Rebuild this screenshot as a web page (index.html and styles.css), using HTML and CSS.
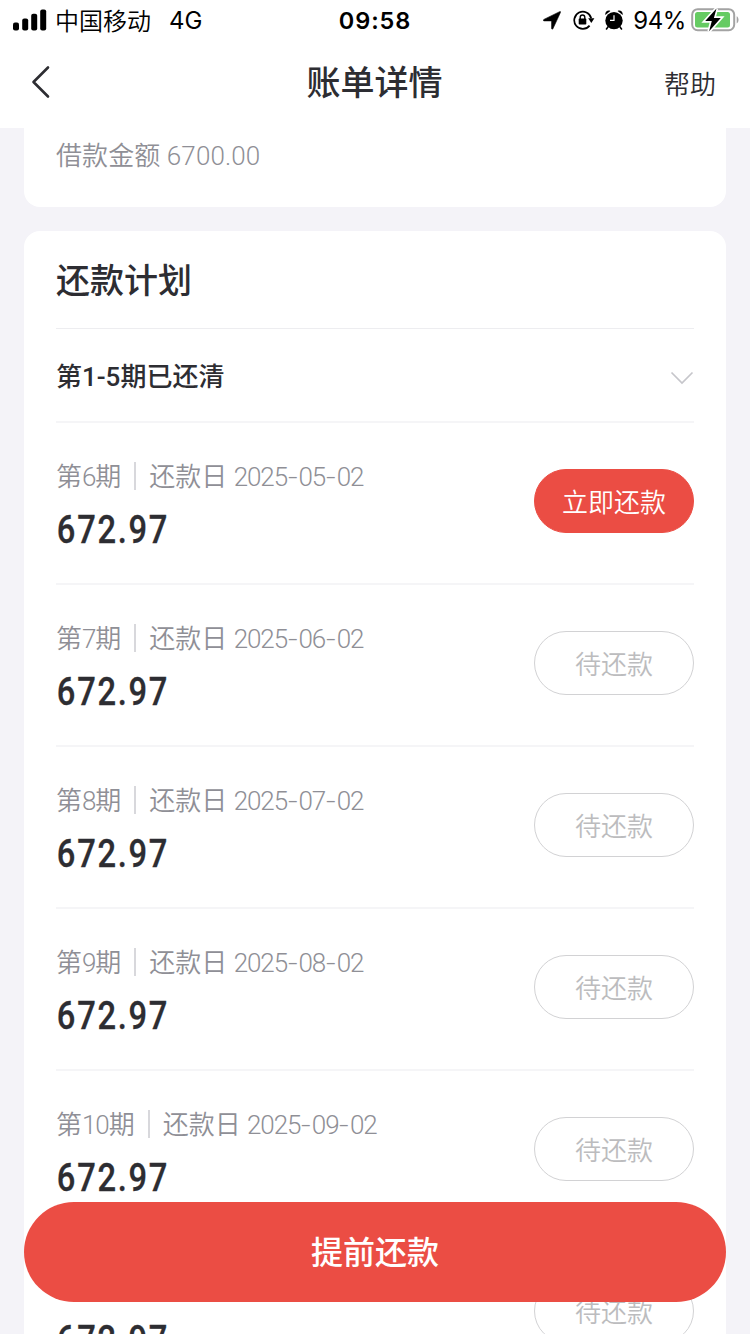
FILE: index.html
```
<!DOCTYPE html>
<html lang="zh-CN">
<head>
<meta charset="utf-8">
<title>账单详情</title>
<link rel="stylesheet" href="styles.css">
</head>
<body>
<div class="screen">
  <header class="top">
    <div class="status">
      <div class="status-left">
        <svg class="signal" width="34" height="22" viewBox="0 0 34 22"><rect x="0" y="13.6" width="6" height="7.9" rx="2"/><rect x="9.2" y="9.6" width="6" height="11.9" rx="2"/><rect x="18.2" y="4.8" width="6" height="16.7" rx="2"/><rect x="27.2" y="0.6" width="6" height="20.9" rx="2"/></svg>
        <span class="carrier">中国移动</span>
        <span class="network">4G</span>
      </div>
      <div class="clock">09:58</div>
      <div class="status-right">
        <svg class="i-loc" width="18" height="19" viewBox="0 0 18 19"><path d="M16.600.700c.8-.4 1.200 0 .8.900L10 17.600c-.4.900-1.400.700-1.400-.2V9.900H1.200C.1 9.900 0 8.900.9 8.400z" stroke="#000" stroke-width=".6"/></svg>
        <svg class="i-lock" width="22" height="20" viewBox="0 0 22 20"><path d="M16.6 15.600A8.600 8.600 0 1 1 18.200 8.200" fill="none" stroke="#000" stroke-width="1.700"/><path d="M15.200 8.200h6.200l-3.100 4.700z"/><rect x="5.700" y="8.600" width="7.600" height="5.900" rx=".8"/><path d="M7.200 9V7.300a2.300 2.300 0 0 1 4.600 0V9" fill="none" stroke="#000" stroke-width="1.400"/></svg>
        <svg class="i-alarm" width="18" height="20" viewBox="0 0 18 20"><circle cx="9" cy="10.600" r="8.700"/><path d="M.3 4.900C-.2 2 2.500-.3 5.400.9zM17.700 4.900C18.200 2 15.500-.3 12.600.9z"/><path d="M3.400 16.400 1.500 19M14.600 16.400l1.900 2.600" stroke="#000" stroke-width="1.600" stroke-linecap="round"/><path d="M9 5.300v5.100H5" fill="none" stroke="#fff" stroke-width="1.200"/></svg>
        <span class="percent">94%</span>
        <svg class="i-batt" width="49" height="24" viewBox="0 0 49 24"><rect x="1.200" y="1.200" width="42" height="21" rx="5.500" fill="#fff" stroke="#a3a3a3" stroke-width="2"/><rect x="4" y="4" width="35" height="15.500" rx="2.500" fill="#65cb62"/><path d="M45.700 8.200c2.400 1.200 2.400 6 0 7.200z" fill="#a3a3a3"/><path d="M25.500.5 14.200 13h6.600l-2.700 10.200L29.800 10h-6.900z" fill="#000" stroke="#fff" stroke-width="3.400" paint-order="stroke"/></svg>
      </div>
    </div>
    <nav class="nav">
      <svg class="back" width="20" height="34" viewBox="0 0 20 34"><path d="M17 2.500 2.500 17 17 31.500" fill="none" stroke="#2d2d32" stroke-width="2.600" stroke-linecap="round" stroke-linejoin="round"/></svg>
      <h1 class="nav-title">账单详情</h1>
      <a class="help">帮助</a>
    </nav>
  </header>
  <main class="content">
    <section class="card summary">借款金额 6700.00</section>
    <section class="card plan">
      <h2 class="plan-title">还款计划</h2>
      <div class="cleared"><span>第1-5期已还清</span>
        <svg class="chevron" width="24" height="14" viewBox="0 0 24 14"><path d="M1.500 1.500 12 12 22.500 1.500" fill="none" stroke="#c6c6cb" stroke-width="1.700"/></svg>
      </div>
      <div class="row"><div class="info"><div class="meta"><span>第<b>6</b>期</span><i class="bar"></i><span>还款日 <b>2025<i class="dash">-</i>05<i class="dash">-</i>02</b></span></div><div class="amount">672.97</div></div><button class="pill pay">立即还款</button></div>
      <div class="row"><div class="info"><div class="meta"><span>第<b>7</b>期</span><i class="bar"></i><span>还款日 <b>2025<i class="dash">-</i>06<i class="dash">-</i>02</b></span></div><div class="amount">672.97</div></div><button class="pill">待还款</button></div>
      <div class="row"><div class="info"><div class="meta"><span>第<b>8</b>期</span><i class="bar"></i><span>还款日 <b>2025<i class="dash">-</i>07<i class="dash">-</i>02</b></span></div><div class="amount">672.97</div></div><button class="pill">待还款</button></div>
      <div class="row"><div class="info"><div class="meta"><span>第<b>9</b>期</span><i class="bar"></i><span>还款日 <b>2025<i class="dash">-</i>08<i class="dash">-</i>02</b></span></div><div class="amount">672.97</div></div><button class="pill">待还款</button></div>
      <div class="row"><div class="info"><div class="meta"><span>第<b>10</b>期</span><i class="bar"></i><span>还款日 <b>2025<i class="dash">-</i>09<i class="dash">-</i>02</b></span></div><div class="amount">672.97</div></div><button class="pill">待还款</button></div>
      <div class="row"><div class="info"><div class="meta"><span>第<b>11</b>期</span><i class="bar"></i><span>还款日 <b>2025<i class="dash">-</i>10<i class="dash">-</i>02</b></span></div><div class="amount">672.97</div></div><button class="pill">待还款</button></div>
    </section>
  </main>
  <button class="prepay">提前还款</button>
</div>
</body>
</html>
```
FILE: styles.css
```
* { box-sizing: border-box; margin: 0; padding: 0; }
body { background: #f4f3f8; font-family: Roboto, "Noto Sans CJK SC", sans-serif; color: #2d2d32; }
button { border: 0; font: inherit; }
.screen { position: relative; width: 750px; height: 1334px; overflow: hidden; display: flex; flex-direction: column; }
.top { height: 128px; flex: none; background: #fff; }
.status { height: 40px; display: grid; grid-template-columns: 1fr auto 1fr; align-items: center; color: #000; font-family: Inter, "Noto Sans CJK SC", sans-serif; font-size: 24px; line-height: 36px; }
.status-left, .status-right { display: flex; align-items: center; }
.status-left { padding-left: 13px; }
.carrier { margin-left: 8px; padding-top: 3px; font-weight: 350; }
.network { margin-left: 18px; padding-top: 2px; }
.clock { padding-top: 2px; font-weight: 600; font-size: 23.5px; letter-spacing: .9px; }
.status-right { justify-content: flex-end; padding-right: 10px; }
.i-lock { margin-left: 12px; }
.i-alarm { margin-left: 10px; }
.percent { margin-left: 10px; padding-top: 2px; font-size: 24px; letter-spacing: -.4px; }
.i-batt { margin-left: 5px; }
.nav { height: 84px; display: grid; grid-template-columns: 1fr auto 1fr; align-items: center; padding: 0 34px 0 31px; }
.nav-title { padding: 2px 0 0 2px; font-size: 34px; font-weight: 500; line-height: 50px; }
.help { justify-self: end; font-size: 26px; font-weight: 350; }
.content { padding: 0 24px; }
.card { background: #fff; border-radius: 16px; padding: 0 32px; }
.summary { height: 79px; border-radius: 0 0 16px 16px; font-size: 26px; font-weight: 350; line-height: 56px; letter-spacing: .1px; color: #8f8f96; }
.plan { margin-top: 24px; }
.plan-title { height: 98px; padding-top: 2px; border-bottom: 1px solid #ededf0; font-size: 34px; font-weight: 500; line-height: 97px; }
.cleared { height: 94px; border-bottom: 2px solid #f5f5f7; display: flex; align-items: center; justify-content: space-between; font-size: 26px; font-weight: 500; }
.cleared span { padding-bottom: 2px; }
.chevron { margin-top: 6px; }
.row { height: 162px; border-bottom: 2px solid #f5f5f7; display: flex; justify-content: space-between; padding-top: 33px; }
.meta { display: flex; align-items: center; height: 40px; font-size: 26px; font-weight: 350; color: #8f8f96; }
.meta span { padding-bottom: 4px; }
.meta b { font-weight: 350; letter-spacing: -1.100px; }
.dash { display: inline-block; width: 11.500px; text-align: center; font-style: normal; letter-spacing: 0; transform: scaleX(1.300); }
.bar { width: 2px; height: 28px; margin: 0 13px; background: #d8d8dc; }
.amount { font-size: 38px; font-weight: 500; line-height: 44px; margin-top: 12px; padding-left: 1px; letter-spacing: 2px; transform: scaleX(.86); transform-origin: left; -webkit-text-stroke: .3px #2d2d32; }
.pill { width: 160px; height: 64px; margin-top: 13px; padding-bottom: 2px; border: 1px solid #d2d2d4; border-radius: 32px; background: #fff; color: #bcbcbe; font-size: 26px; font-weight: 350; }
.pill.pay { border-color: #eb4d44; background: #eb4d44; color: #fff; }
.prepay { position: absolute; left: 24px; bottom: 32px; width: 702px; height: 100px; padding-bottom: 4px; border-radius: 50px; background: #eb4d44; color: #fff; font-size: 32px; font-weight: 500; }
```
